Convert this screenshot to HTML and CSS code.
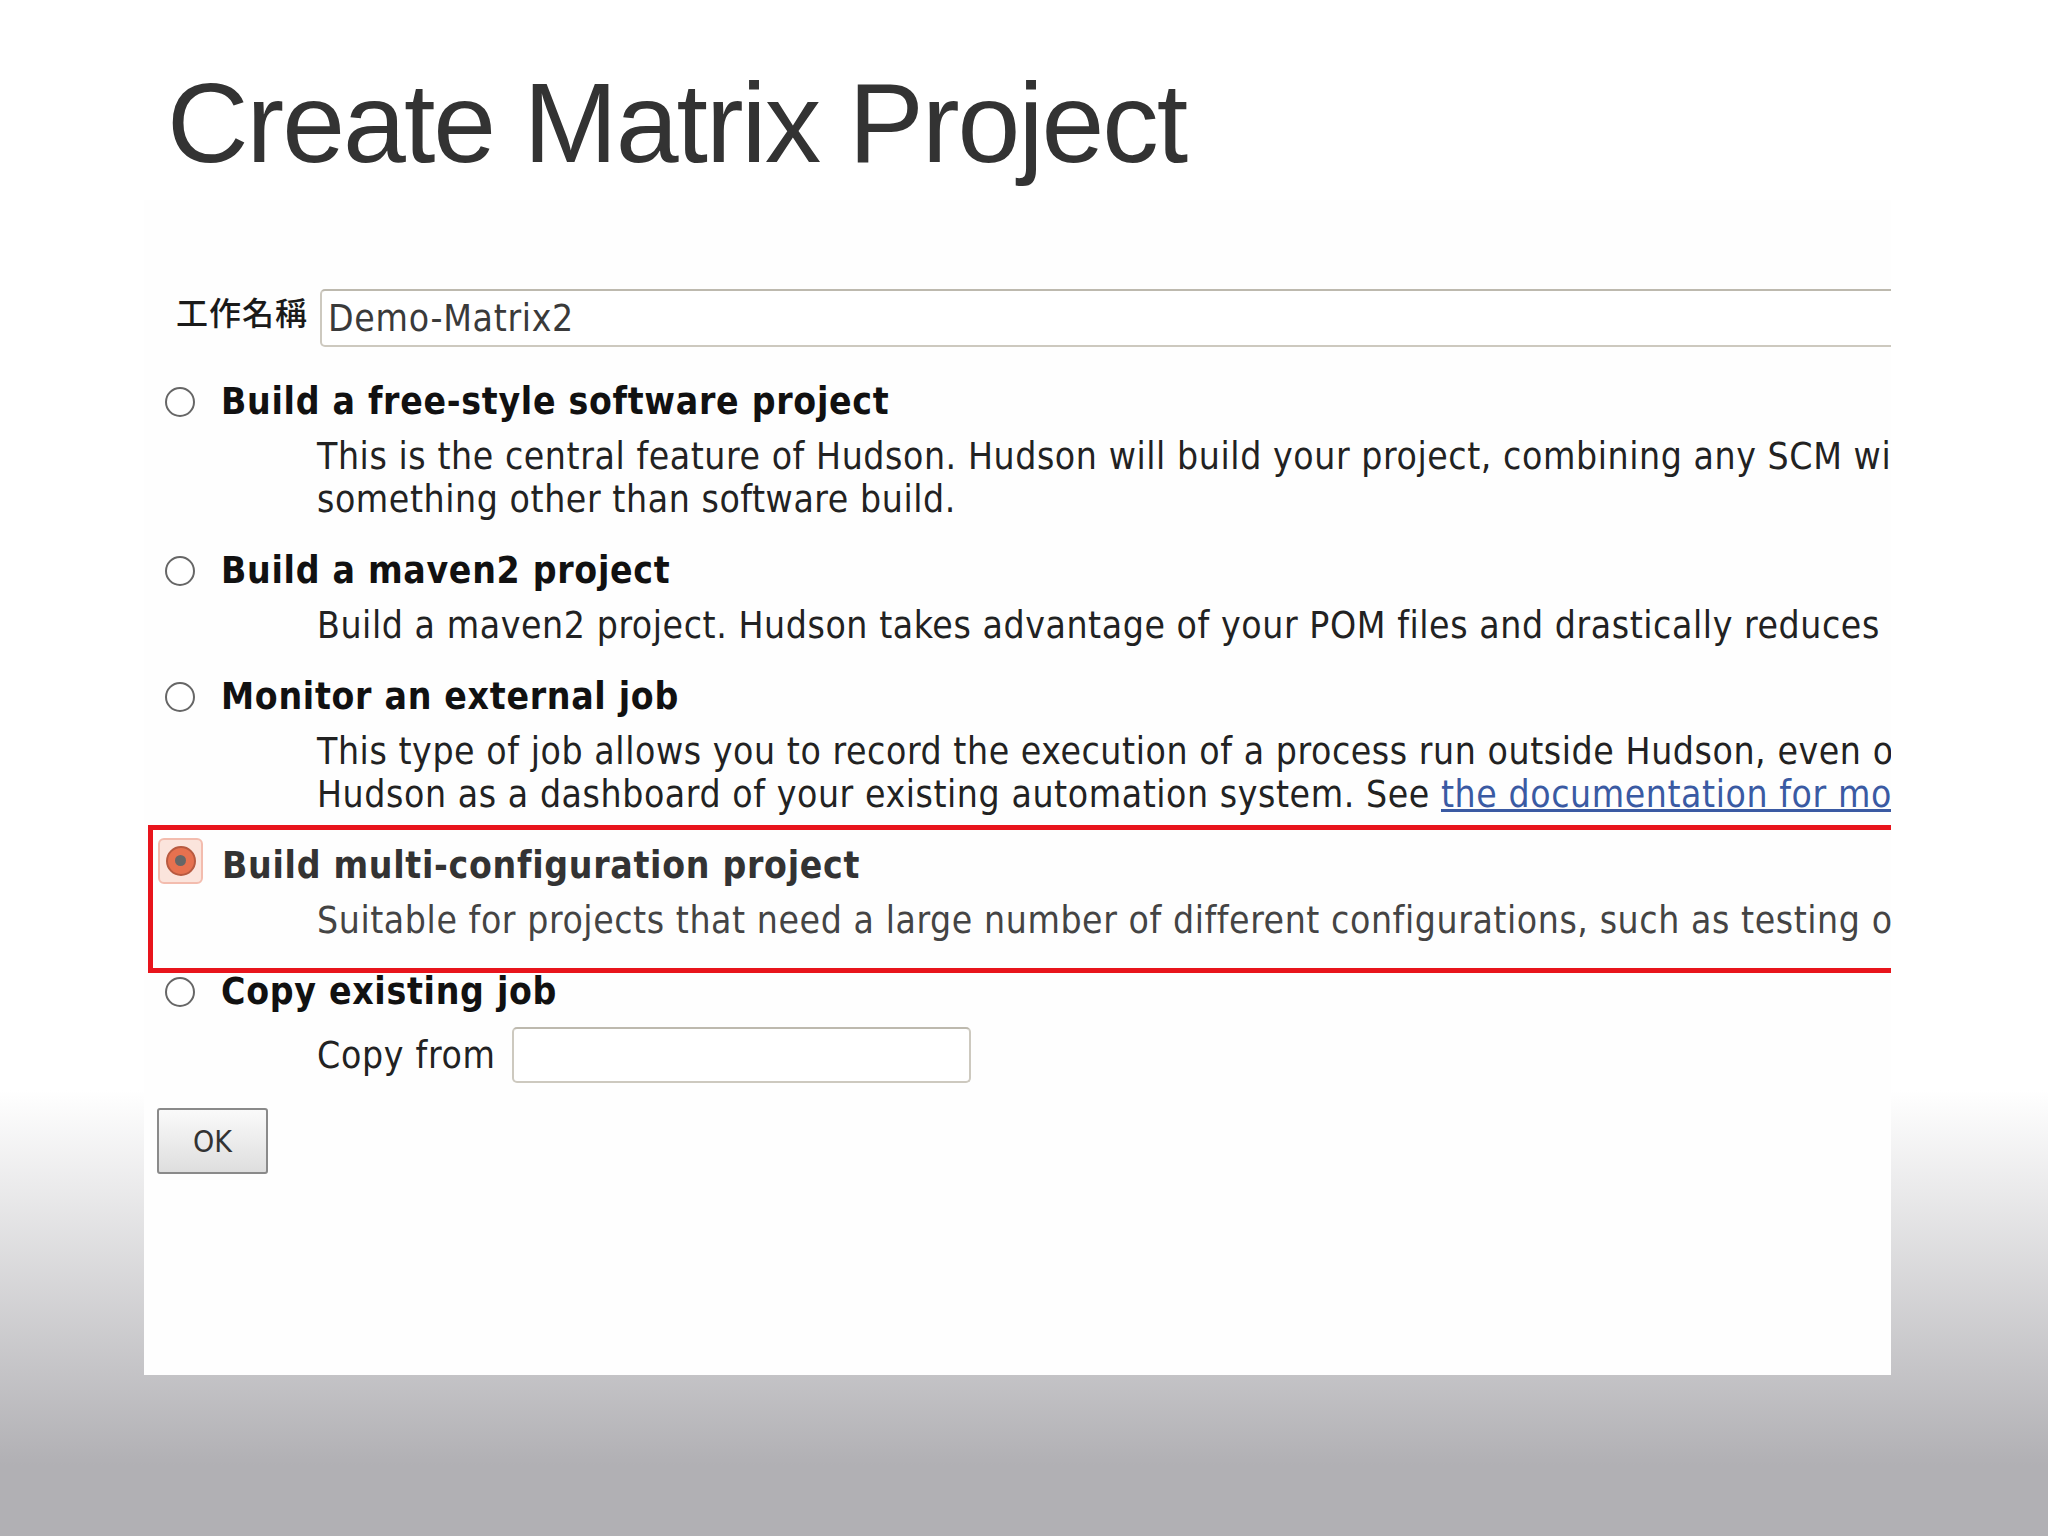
FILE: index.html
```html
<!DOCTYPE html>
<html lang="zh-Hant">
<head>
    <meta charset="UTF-8">
    <meta name="viewport" content="width=device-width, initial-scale=1.0">
    <title>Create Matrix Project</title>
    <link rel="stylesheet" href="styles.css">
</head>
<body>
    <div class="slide">
        <h1 class="slide-title">Create Matrix Project</h1>

        <div class="panel">
            <div class="job-row">
                <span class="job-label">工作名稱</span>
                <input class="text-box job-name" type="text" value="Demo-Matrix2">
            </div>

            <div class="option first">
                <div class="option-head">
                    <span class="radio"></span>
                    <span class="option-title">Build a free-style software project</span>
                </div>
                <div class="option-desc">
                    This is the central feature of Hudson. Hudson will build your project, combining any SCM with any build system, and this can be even used for<br>
                    something other than software build.
                </div>
            </div>

            <div class="option">
                <div class="option-head">
                    <span class="radio"></span>
                    <span class="option-title">Build a maven2 project</span>
                </div>
                <div class="option-desc">
                    Build a maven2 project. Hudson takes advantage of your POM files and drastically reduces the configuration.
                </div>
            </div>

            <div class="option">
                <div class="option-head">
                    <span class="radio"></span>
                    <span class="option-title">Monitor an external job</span>
                </div>
                <div class="option-desc">
                    This type of job allows you to record the execution of a process run outside Hudson, even on a remote machine. This is designed so that you can use<br>
                    Hudson as a dashboard of your existing automation system. See <a href="#">the documentation for more details</a>.
                </div>
            </div>

            <div class="option selected">
                <div class="highlight"></div>
                <div class="option-head">
                    <span class="radio-focus"><span class="radio checked"></span></span>
                    <span class="option-title">Build multi-configuration project</span>
                </div>
                <div class="option-desc">
                    Suitable for projects that need a large number of different configurations, such as testing on multiple environments, platform-specific builds, etc.
                </div>
            </div>

            <div class="option">
                <div class="option-head">
                    <span class="radio"></span>
                    <span class="option-title">Copy existing job</span>
                </div>
                <div class="copy-row">
                    <span class="copy-label">Copy from</span>
                    <input class="text-box copy-from" type="text">
                </div>
            </div>

            <button class="ok-btn">OK</button>
        </div>
    </div>
</body>
</html>
```

FILE: styles.css
```css
body {
    margin: 0;
}

.slide {
    height: 1536px;
    overflow: hidden;
    background: linear-gradient(to bottom, #ffffff 0, #ffffff 1090px, #b1b0b4 1465px, #b1b0b4 100%);
}

.slide-title {
    margin: 0;
    padding: 66px 0 0 167px;
    font-family: "Liberation Sans", Arial, sans-serif;
    font-weight: normal;
    font-size: 113px;
    line-height: 114px;
    letter-spacing: -2px;
    color: #333333;
}

.panel {
    position: relative;
    margin: 20px 0 0 144px;
    width: 1747px;
    height: 1175px;
    box-sizing: border-box;
    padding-top: 89px;
    overflow: hidden;
    background-color: #fefefe;
    font-family: "DejaVu Sans Condensed", "DejaVu Sans", sans-serif;
    font-stretch: condensed;
    font-size: 37px;
    letter-spacing: 0.7px;
    line-height: 43px;
    color: #222222;
}

.job-row {
    display: flex;
    align-items: center;
    padding-left: 32px;
    margin-right: -30px;
}

.job-label {
    font-family: "Noto Sans CJK TC", sans-serif;
    font-size: 32px;
    font-weight: 500;
    letter-spacing: 1px;
    margin-right: 12px;
    margin-top: -14px;
    color: #1a1a1a;
}

.text-box {
    box-sizing: border-box;
    height: 58px;
    border: 2px solid #cdc9bf;
    border-top-color: #bdb9ae;
    border-radius: 5px;
    padding: 0 6px;
    font-family: inherit;
    font-stretch: condensed;
    font-size: 37px;
    letter-spacing: 0.7px;
    color: #3a3a3a;
    background: #ffffff;
}

.job-name {
    flex: 1;
}

.option {
    position: relative;
    margin-top: 28px;
}

.option.first {
    margin-top: 33px;
}

.option-head {
    display: flex;
    align-items: center;
    height: 43px;
    padding-left: 21px;
}

.option-title {
    margin-left: 26px;
    font-weight: bold;
    color: #111111;
    white-space: nowrap;
}

.option-desc {
    margin-top: 12px;
    padding-left: 173px;
    letter-spacing: 0.58px;
    white-space: nowrap;
}

.option-desc a {
    color: #3a5aa3;
}

.radio {
    display: block;
    width: 30px;
    height: 30px;
    box-sizing: border-box;
    border: 2.5px solid #666666;
    border-radius: 50%;
    background: #ffffff;
}

.radio-focus {
    display: flex;
    align-items: center;
    justify-content: center;
    width: 45px;
    height: 46px;
    margin: -10px -7px 0 -7px;
    box-sizing: border-box;
    border: 2px solid #f3bcae;
    border-radius: 6px;
    background: #fbe4dc;
}

.radio.checked {
    position: relative;
    border-color: #b85a40;
    background: #e6714f;
}

.radio.checked::after {
    content: "";
    position: absolute;
    top: 7px;
    left: 7px;
    width: 11px;
    height: 11px;
    border-radius: 50%;
    background: #666666;
}

.selected .option-title {
    color: #333333;
}

.selected .option-desc {
    color: #444444;
}

/* red annotation box drawn over the screenshot */
.highlight {
    position: absolute;
    top: -19px;
    left: 4px;
    right: -30px;
    height: 148px;
    box-sizing: border-box;
    border: 5px solid #e8141c;
    z-index: 2;
    pointer-events: none;
}

.copy-row {
    display: flex;
    align-items: center;
    margin-top: 14px;
    padding-left: 173px;
}

.copy-label {
    margin-right: 16px;
}

.copy-from {
    width: 459px;
    height: 56px;
}

.ok-btn {
    display: block;
    margin: 25px 0 0 13px;
    width: 111px;
    height: 66px;
    border: 2px solid #8a8a8a;
    border-radius: 3px;
    background: linear-gradient(to bottom, #fafafa, #dedede);
    font-family: "DejaVu Sans Condensed", "DejaVu Sans", sans-serif;
    font-stretch: condensed;
    font-size: 30px;
    color: #333333;
}
```
